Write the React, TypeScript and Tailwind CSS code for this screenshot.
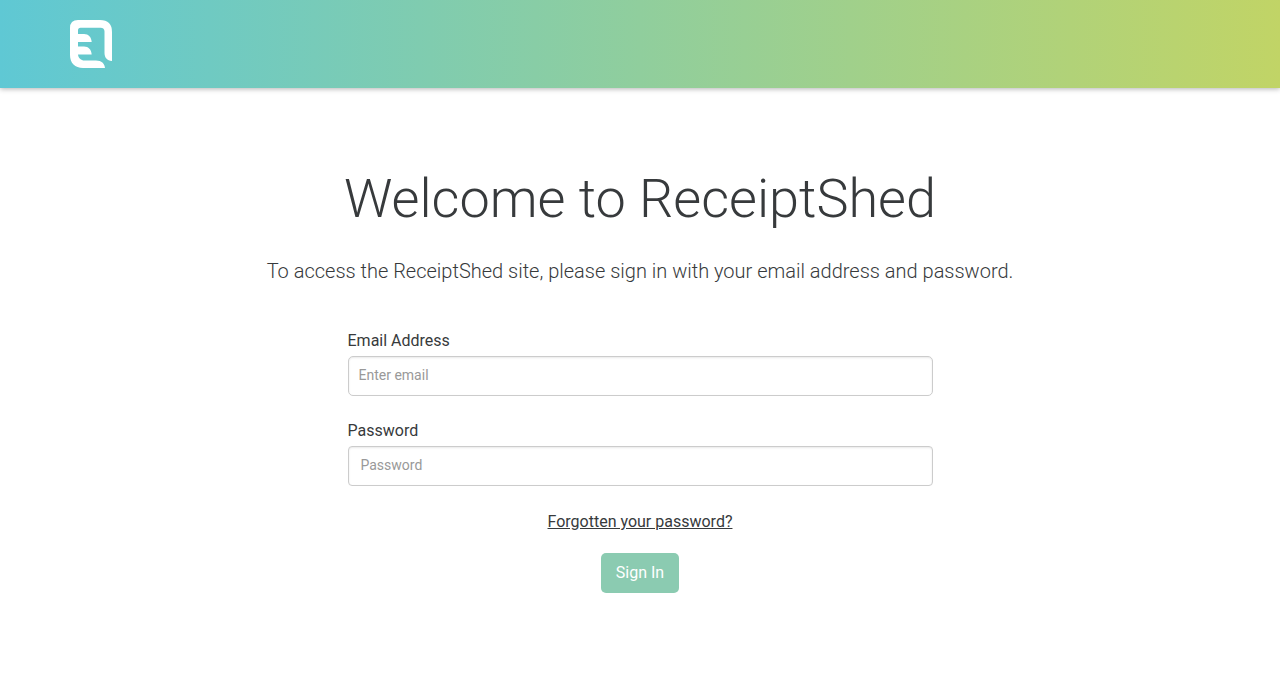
function Logo() {
  return (
    <svg width="42" height="48" viewBox="0 0 42 48" fill="#fff" role="img" aria-label="ReceiptShed">
      <path d="M8 0H30Q42 0 42 12V41C37 40.5 34.5 37.5 34.5 33V11.500Q34.500 7.700 30.500 7.700H10.500Q8 7.700 8 10.500V14H14C18.500 14 21.400 17 21.700 22H8V26.500H14C18.500 26.500 21.400 29.500 21.700 34.500H8C8.300 38 11 40.500 14.500 40.500H26C31.500 40.500 34.700 43.500 35 48H13C5 48 0 43 0 35V8Q0 0 8 0Z" />
    </svg>
  );
}

type FieldProps = { id: string; label: string; type: string; placeholder: string; inputClass: string };

function Field({ id, label, type, placeholder, inputClass }: FieldProps) {
  return (
    <div className="flex flex-col">
      <label htmlFor={id} className="mb-1 h-[22px] leading-[22px]">{label}</label>
      <input
        id={id}
        type={type}
        placeholder={placeholder}
        className={`h-10 w-full border border-[#ccc] bg-white pb-[2px] text-sm shadow-[inset_0_1px_2px_rgba(0,0,0,0.09)] outline-none placeholder:text-[#999] ${inputClass}`}
      />
    </div>
  );
}

export default function App() {
  return (
    <div className="min-h-[680px] bg-white font-['Roboto',sans-serif] text-base text-[#373a3c]">
      <header className="flex h-[88px] items-center bg-[linear-gradient(to_right,#5fc8d4,#c1d466)] px-[70px] shadow-[0_1px_5px_rgba(0,0,0,0.3)]">
        <Logo />
      </header>
      <main className="flex flex-col items-center pt-20">
        <h1 className="text-[54px] leading-[62px] font-light">Welcome to ReceiptShed</h1>
        <p className="mt-[27px] text-xl leading-7 font-light">
          To access the ReceiptShed site, please sign in with your email address and password.
        </p>
        <form className="mt-[45px] flex w-[585px] flex-col gap-6" onSubmit={(e) => e.preventDefault()}>
          <Field id="email" label="Email Address" type="email" placeholder="Enter email" inputClass="rounded-[5px] px-[10px]" />
          <Field id="password" label="Password" type="password" placeholder="Password" inputClass="rounded px-3" />
          <div className="flex flex-col items-center">
            <a href="#" className="mt-px leading-[22px] underline">Forgotten your password?</a>
            <button type="submit" className="mt-5 h-10 w-[78px] rounded-[5px] bg-[#8bcbb1] text-white">Sign In</button>
          </div>
        </form>
      </main>
    </div>
  );
}
